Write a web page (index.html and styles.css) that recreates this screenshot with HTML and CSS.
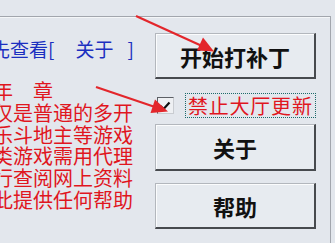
FILE: index.html
```html
<!DOCTYPE html>
<html>
<head>
<meta charset="utf-8">
<link rel="stylesheet" href="styles.css">
</head>
<body>
<div class="page">
  <div class="group">
    <div class="left">
      <div class="hint"><span>先查看[</span><span class="about">关于</span><span class="close">]</span></div>
      <div class="notice">
        <div class="line">年　章</div>
        <div class="line">仅是普通的多开</div>
        <div class="line">乐斗地主等游戏</div>
        <div class="line">类游戏需用代理</div>
        <div class="line">行查阅网上资料</div>
        <div class="line">此提供任何帮助</div>
      </div>
    </div>
    <div class="right">
      <button class="btn btn-start">开始打补丁</button>
      <div class="check-row">
        <span class="checkbox"><svg width="12" height="12" viewBox="0 0 12 12"><path d="M1.5 6 L4.6 9 L10.5 2.5" fill="none" stroke="#111" stroke-width="2.2"/></svg></span>
        <span class="check-label">禁止大厅更新</span>
      </div>
      <button class="btn btn-about">关于</button>
      <button class="btn btn-help">帮助</button>
    </div>
  </div>
  <svg class="arrows" width="335" height="243" viewBox="0 0 335 243">
    <line x1="136" y1="16" x2="202" y2="46" stroke="#e3262b" stroke-width="2.2"/>
    <polygon points="214,51.5 197,50.5 203,37.5" fill="#e3262b"/>
    <line x1="96" y1="87" x2="155" y2="107" stroke="#e3262b" stroke-width="2.2"/>
    <polygon points="168,111.5 150.5,113 155,99.5" fill="#e3262b"/>
  </svg>
</div>
</body>
</html>
```
FILE: styles.css
```css
html, body {
  margin: 0;
  padding: 0;
}
body {
  background: #e3e7ed;
  width: 335px;
  height: 243px;
  overflow: hidden;
  font-family: "Noto Sans CJK SC", "Noto Sans", sans-serif;
}
.page {
  position: relative;
  width: 335px;
  height: 243px;
  padding-top: 16px;
  box-sizing: border-box;
}
.group {
  width: 331px;
  height: 227px;
  box-sizing: border-box;
  border-top: 1px solid #a2a6ad;
  border-right: 1px solid #a2a6ad;
  box-shadow: inset 0 1px 0 #f4f6f8;
  display: flex;
  overflow: hidden;
}
.left {
  width: 155px;
  flex: none;
  overflow: hidden;
}
.hint {
  margin-top: 21px;
  margin-left: -9px;
  font-size: 19px;
  line-height: 21px;
  color: #1c2fc0;
  white-space: nowrap;
}
.hint .about {
  margin-left: 21px;
}
.hint .close {
  margin-left: 14px;
}
.notice {
  margin-top: 21px;
  margin-left: -7px;
  color: #e0161e;
  font-size: 20px;
  line-height: 21.8px;
  white-space: nowrap;
}
.right {
  width: 161px;
  flex: none;
  display: flex;
  flex-direction: column;
}
.btn {
  font-family: "Noto Sans CJK SC", "Noto Sans", sans-serif;
  font-weight: bold;
  font-size: 22px;
  color: #111;
  background: #e7ebf0;
  border-style: solid;
  border-width: 1px 2px 2px 1px;
  border-color: #b3b7bd #474a4e #474a4e #b3b7bd;
  box-shadow: inset 1px 1px 0 #fbfcfd;
  padding: 0;
  margin: 0;
  width: 161px;
  line-height: 1;
}
.btn-start {
  margin-top: 16px;
  height: 46px;
}
.check-row {
  margin-top: 14px;
  height: 25px;
  display: flex;
  align-items: center;
}
.checkbox {
  margin-left: 2px;
  width: 15px;
  height: 15px;
  border: 1px solid;
  border-color: #5d6066 #c9ccd1 #c9ccd1 #5d6066;
  background: #eef0f3;
  display: flex;
  align-items: center;
  justify-content: center;
}
.check-label {
  margin-left: 11px;
  width: 128px;
  height: 23px;
  border: 1px dotted #1d6a6a;
  color: #e0161e;
  font-size: 20px;
  line-height: 23px;
  letter-spacing: 0.8px;
  padding-left: 2px;
  box-sizing: content-box;
  white-space: nowrap;
}
.btn-about {
  margin-top: 6px;
  height: 47px;
}
.btn-help {
  margin-top: 12px;
  height: 46px;
}
.arrows {
  position: absolute;
  left: 0;
  top: 0;
  pointer-events: none;
}
```
